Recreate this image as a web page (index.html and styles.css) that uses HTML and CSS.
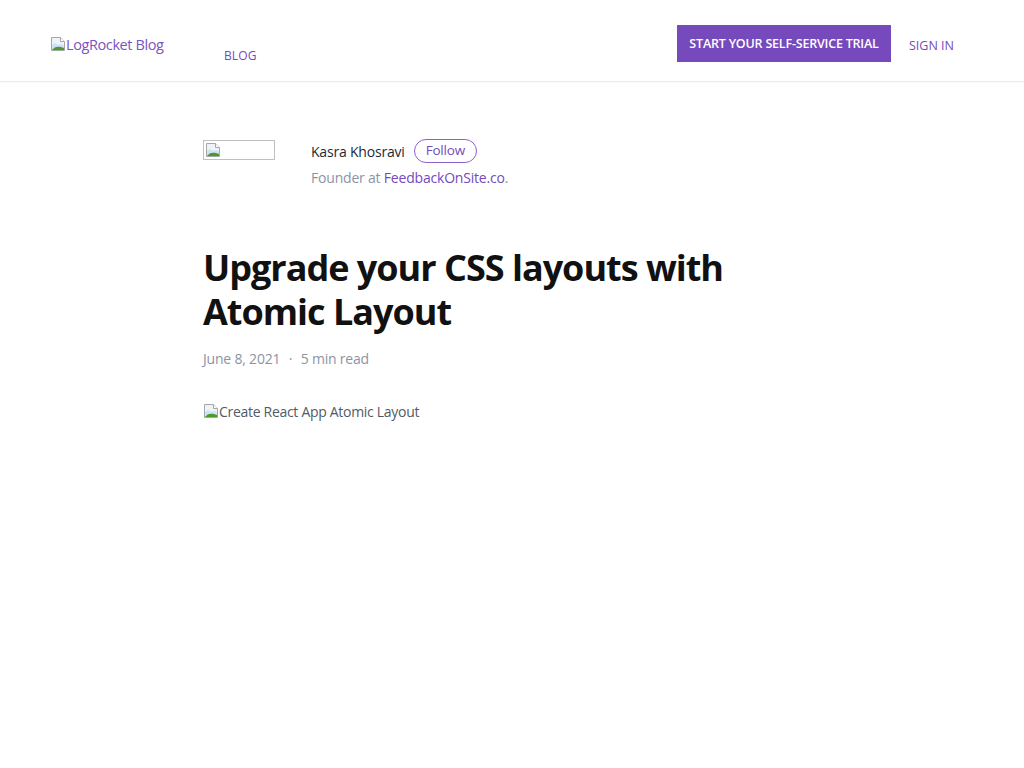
FILE: index.html
```html
<!DOCTYPE html>
<html>
<head>
<meta charset="utf-8">
<link rel="stylesheet" href="styles.css">
</head>
<body>
<header class="site-header">
  <a class="logo" href="#"><svg class="broken" viewBox="0 0 16 16" width="16" height="16"><path d="M1.5 1.5h9l4 4v9h-13z" fill="#eef3fa" stroke="#a7a7a7"/><path d="M10.5 1.5v4h4" fill="#fff" stroke="#a7a7a7"/><path d="M2 9l3-2 3 2 3-1 3 1.5V14H2z" fill="#cfe3f6"/><path d="M2 14c2-3 5-4 9-3l3 1V14z" fill="#4c9a2a"/></svg>LogRocket Blog</a>
  <nav class="main-nav"><a href="#">BLOG</a></nav>
  <div class="header-actions">
    <a class="trial-btn" href="#">START YOUR SELF-SERVICE TRIAL</a>
    <a class="signin" href="#">SIGN IN</a>
  </div>
</header>
<main class="article">
  <div class="author">
    <div class="avatar"><svg class="broken" viewBox="0 0 16 16" width="16" height="16"><path d="M1.5 1.5h9l4 4v9h-13z" fill="#eef3fa" stroke="#a7a7a7"/><path d="M10.5 1.5v4h4" fill="#fff" stroke="#a7a7a7"/><path d="M2 9l3-2 3 2 3-1 3 1.5V14H2z" fill="#cfe3f6"/><path d="M2 14c2-3 5-4 9-3l3 1V14z" fill="#4c9a2a"/></svg></div>
    <div class="author-info">
      <div class="author-line"><span class="author-name">Kasra Khosravi</span><a class="follow" href="#">Follow</a></div>
      <div class="author-bio">Founder at <a href="#">FeedbackOnSite.co</a>.</div>
    </div>
  </div>
  <h1 class="title">Upgrade your CSS layouts with Atomic Layout</h1>
  <div class="meta">June 8, 2021 <span class="dot">·</span> 5 min read</div>
  <div class="hero"><svg class="broken" viewBox="0 0 16 16" width="16" height="16"><path d="M1.5 1.5h9l4 4v9h-13z" fill="#eef3fa" stroke="#a7a7a7"/><path d="M10.5 1.5v4h4" fill="#fff" stroke="#a7a7a7"/><path d="M2 9l3-2 3 2 3-1 3 1.5V14H2z" fill="#cfe3f6"/><path d="M2 14c2-3 5-4 9-3l3 1V14z" fill="#4c9a2a"/></svg>Create React App Atomic Layout</div>
</main>
</body>
</html>
```
FILE: styles.css
```css
* { box-sizing: border-box; }
body {
  margin: 0;
  font-family: "Open Sans", "Noto Sans", sans-serif;
  background: #fff;
  color: #161616;
}
a { text-decoration: none; }
.broken { display: inline-block; vertical-align: -2px; }
.site-header {
  height: 82px;
  border-bottom: 1px solid #ececec;
  box-shadow: 0 1px 2px rgba(0,0,0,0.03);
  display: flex;
  align-items: flex-start;
  padding: 0 50px;
}
.logo {
  margin-top: 35px;
  font-size: 14.5px;
  color: #7b52c2;
  letter-spacing: -0.4px;
  width: 174px;
}
.main-nav { margin-top: 43px; }
.main-nav a {
  font-size: 12px;
  color: #764abc;
  letter-spacing: 0.1px;
}
.header-actions {
  margin-left: auto;
  margin-top: 25px;
  display: flex;
  align-items: center;
  gap: 18px;
  padding-right: 20px;
}
.trial-btn {
  background: #764abc;
  color: #fff;
  font-size: 12.5px;
  font-weight: 600;
  height: 37px;
  width: 214px;
  display: flex;
  align-items: center;
  justify-content: center;
  letter-spacing: -0.2px;
}
.signin {
  font-size: 12.5px;
  color: #764abc;
  letter-spacing: 0px;
  margin-top: 3px;
}
.article {
  width: 618px;
  margin: 0 auto;
  padding-top: 58px;
}
.author { display: flex; gap: 36px; }
.avatar {
  width: 72px;
  height: 20px;
  border: 1px solid #c0c0c0;
  padding: 1px 0 0 1px;
  line-height: 0;
}
.author-line { display: flex; align-items: center; gap: 9px; height: 22px; }
.author-name { font-size: 14px; color: #1e2a38; letter-spacing: -0.2px; }
.follow {
  font-size: 13.5px;
  color: #764abc;
  border: 1px solid #8c62cc;
  border-radius: 12px;
  padding: 0 11px;
  height: 24px;
  line-height: 21px;
  letter-spacing: -0.2px;
}
.author-bio {
  margin-top: 6px;
  font-size: 14px;
  color: #8b94a3;
  letter-spacing: -0.2px;
}
.author-bio a { color: #764abc; }
.title {
  margin: 59px 0 0;
  font-size: 36px;
  line-height: 44px;
  font-weight: 700;
  color: #111;
  letter-spacing: -1px;
  width: 560px;
}
.meta {
  margin-top: 15px;
  font-size: 14px;
  color: #8b94a3;
  letter-spacing: -0.2px;
}
.dot { margin: 0 5px; }
.hero {
  margin-top: 34px;
  font-size: 14px;
  color: #525a66;
  letter-spacing: -0.3px;
}
```
